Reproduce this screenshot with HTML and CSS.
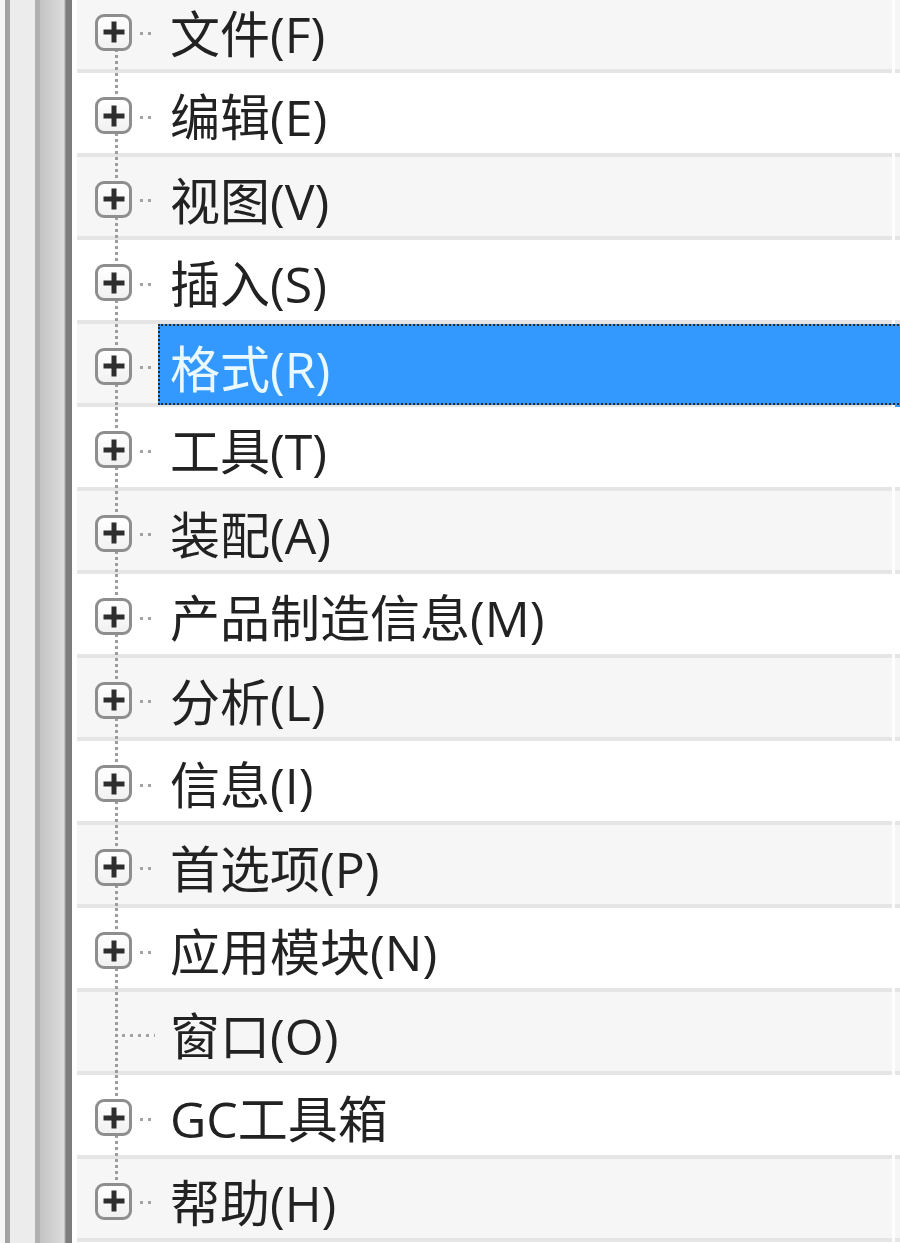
FILE: index.html
```html
<!DOCTYPE html>
<html lang="zh-CN">

<head>
    <meta charset="UTF-8">
    <title>菜单树</title>
    <link rel="stylesheet" href="styles.css">
</head>

<body>
    <div class="pane">
        <div class="gutter"></div>

        <ul class="tree">
            <li class="node first"><div class="cell"><span class="twig"><span class="expander"></span></span><span class="label">文件(F)</span></div><div class="spare"></div></li>
            <li class="node"><div class="cell"><span class="twig"><span class="expander"></span></span><span class="label">编辑(E)</span></div><div class="spare"></div></li>
            <li class="node"><div class="cell"><span class="twig"><span class="expander"></span></span><span class="label">视图(V)</span></div><div class="spare"></div></li>
            <li class="node"><div class="cell"><span class="twig"><span class="expander"></span></span><span class="label">插入(S)</span></div><div class="spare"></div></li>
            <li class="node selected"><div class="cell"><span class="twig"><span class="expander"></span></span><span class="label">格式(R)</span></div><div class="spare"></div></li>
            <li class="node"><div class="cell"><span class="twig"><span class="expander"></span></span><span class="label">工具(T)</span></div><div class="spare"></div></li>
            <li class="node"><div class="cell"><span class="twig"><span class="expander"></span></span><span class="label">装配(A)</span></div><div class="spare"></div></li>
            <li class="node"><div class="cell"><span class="twig"><span class="expander"></span></span><span class="label">产品制造信息(M)</span></div><div class="spare"></div></li>
            <li class="node"><div class="cell"><span class="twig"><span class="expander"></span></span><span class="label">分析(L)</span></div><div class="spare"></div></li>
            <li class="node"><div class="cell"><span class="twig"><span class="expander"></span></span><span class="label">信息(I)</span></div><div class="spare"></div></li>
            <li class="node"><div class="cell"><span class="twig"><span class="expander"></span></span><span class="label">首选项(P)</span></div><div class="spare"></div></li>
            <li class="node"><div class="cell"><span class="twig"><span class="expander"></span></span><span class="label">应用模块(N)</span></div><div class="spare"></div></li>
            <li class="node leaf"><div class="cell"><span class="twig"></span><span class="label">窗口(O)</span></div><div class="spare"></div></li>
            <li class="node"><div class="cell"><span class="twig"><span class="expander"></span></span><span class="label">GC工具箱</span></div><div class="spare"></div></li>
            <li class="node last"><div class="cell"><span class="twig"><span class="expander"></span></span><span class="label">帮助(H)</span></div><div class="spare"></div></li>
        </ul>
    </div>
</body>

</html>
```

FILE: styles.css
```css
/* Reset */
* {
    padding: 0;
    margin: 0;
    box-sizing: border-box;
}

body {
    width: 900px;
    height: 1243px;
    overflow: hidden;
    background: #fff;
    font-family: "Open Sans", "Noto Sans CJK SC", sans-serif;
    color: #222;
}

.pane {
    display: flex;
    height: 100%;
}

/* Left splitter / frame edge */
.gutter {
    flex: 0 0 77px;
    background: linear-gradient(to right,
            #f6f6f6 0 5px,
            #a3a3a3 5px 10px,
            #ececec 10px 35px,
            #b0b0b0 35px 40px,
            #c4c4c4 40px,
            #dcdcdc 64px,
            #7d7d7d 66px 72px,
            #fff 72px 77px);
}

/* Tree */
.tree {
    flex: 1;
    list-style: none;
    margin-top: -10.5px;
}

.node {
    display: grid;
    grid-template-columns: 1fr 5px;
    column-gap: 3px;
    height: 83.5px;
}

.cell,
.spare {
    display: flex;
    background: linear-gradient(to bottom, #f6f6f6 0 calc(100% - 4px), #e5e5e5 calc(100% - 4px));
}

.node:nth-child(even) .cell,
.node:nth-child(even) .spare {
    background: linear-gradient(to bottom, #fff 0 calc(100% - 4px), #e5e5e5 calc(100% - 4px));
}

/* Connector lines and expander */
.twig {
    flex: 0 0 81px;
    position: relative;
    display: flex;
    align-items: center;
    padding: 2px 0 0 18px;
}

.twig::before {
    content: "";
    position: absolute;
    left: 38px;
    top: 0;
    bottom: 0;
    width: 3px;
    background: repeating-linear-gradient(to bottom, #9d9d9d 0 3px, transparent 3px 6px);
}

.first .twig::before {
    top: 50%;
}

.last .twig::before {
    bottom: 50%;
}

.twig::after {
    content: "";
    position: absolute;
    left: 63px;
    top: calc(50% + 1px);
    width: 15px;
    height: 3px;
    background: repeating-linear-gradient(to right, #a3a3a3 0 3px, transparent 3px 8px);
}

.leaf .twig::after {
    left: 45px;
    width: 33px;
}

.expander {
    position: relative;
    z-index: 1;
    width: 37px;
    height: 37px;
    border: 3px solid #8e8e8e;
    border-radius: 9px;
    background: linear-gradient(#fff, #f1f1f1);
}

.expander::before,
.expander::after {
    content: "";
    position: absolute;
    left: 50%;
    top: 50%;
    background: #2e2e2e;
    transform: translate(-50%, -50%);
}

.expander::before {
    width: 21px;
    height: 5px;
}

.expander::after {
    width: 5px;
    height: 21px;
}

/* Labels */
.label {
    flex: 1;
    display: flex;
    align-items: center;
    height: calc(100% - 4px);
    padding: 4px 0 0 12px;
    font-size: 50px;
    white-space: nowrap;
}

.selected .label {
    position: relative;
    z-index: 1;
    margin-right: -14px;
    background: #3399ff;
    color: #eaf8ff;
    outline: 2px dotted #2a2a2a;
    outline-offset: -2px;
    height: calc(100% - 2px);
}

.selected .spare {
    background: #3399ff;
}
```
